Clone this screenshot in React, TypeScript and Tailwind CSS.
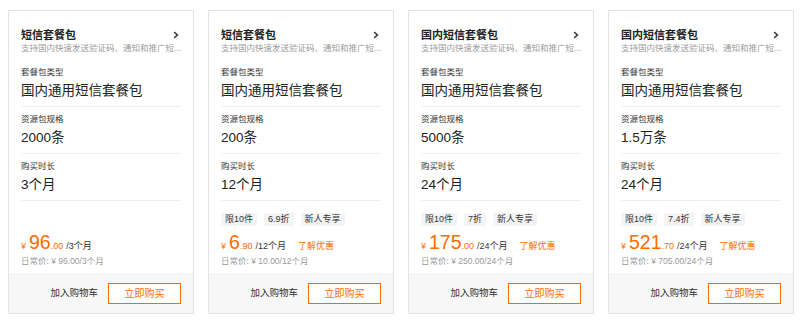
import React from "react";

type Pkg = {
  title: string;
  spec: string;
  duration: string;
  tags: string[];
  int: string;
  dec: string;
  unit: string;
  daily: string;
  promo: boolean;
};

const pkgs: Pkg[] = [
  { title: "短信套餐包", spec: "2000条", duration: "3个月", tags: [], int: "96", dec: ".00", unit: "/3个月", daily: "¥ 96.00/3个月", promo: false },
  { title: "短信套餐包", spec: "200条", duration: "12个月", tags: ["限10件", "6.9折", "新人专享"], int: "6", dec: ".90", unit: "/12个月", daily: "¥ 10.00/12个月", promo: true },
  { title: "国内短信套餐包", spec: "5000条", duration: "24个月", tags: ["限10件", "7折", "新人专享"], int: "175", dec: ".00", unit: "/24个月", daily: "¥ 250.00/24个月", promo: true },
  { title: "国内短信套餐包", spec: "1.5万条", duration: "24个月", tags: ["限10件", "7.4折", "新人专享"], int: "521", dec: ".70", unit: "/24个月", daily: "¥ 705.00/24个月", promo: true },
];

function Field({ label, value }: { label: string; value: string }) {
  return (
    <div className="pt-[6px] pb-[6px] border-b border-[#ededed]">
      <div className="text-[8.5px] leading-[12px] text-[#333]">{label}</div>
      <div className="mt-[4px] text-[13.5px] leading-[18px] text-[#222]">{value}</div>
    </div>
  );
}

function Card({ p }: { p: Pkg }) {
  return (
    <div className="w-[186px] h-[304px] shrink-0 flex flex-col bg-white border border-[#e3e3e3]">
      <div className="flex-1 flex flex-col px-[12px] pt-[17px]">
        <div className="flex items-center justify-between h-[14px]">
          <span className="text-[11px] leading-[14px] font-bold text-[#222]">{p.title}</span>
          <svg width="6" height="8" viewBox="0 0 6 8" className="mr-[2px]">
            <path d="M1.2 1 L4.4 4 L1.2 7" fill="none" stroke="#333" strokeWidth="1.5" />
          </svg>
        </div>
        <div className="text-[8.5px] leading-[12px] text-[#999] whitespace-nowrap">
          支持国内快速发送验证码、通知和推广短...
        </div>
        <div className="mt-[6px]">
          <Field label="套餐包类型" value="国内通用短信套餐包" />
          <Field label="资源包规格" value={p.spec} />
          <Field label="购买时长" value={p.duration} />
        </div>
        <div className="flex-1 flex flex-col justify-end pb-[6px]">
          {p.tags.length > 0 && (
            <div className="flex gap-[7px] mb-[5px]">
              {p.tags.map((t) => (
                <span key={t} className="bg-[#f4f4f4] px-[4px] text-[9px] leading-[13px] text-[#333]">
                  {t}
                </span>
              ))}
            </div>
          )}
          <div className="flex items-baseline h-[22px] text-[#ff6a00]">
            <span className="text-[9px] mr-[3px]">¥</span>
            <span className="text-[19.5px] leading-[22px]">{p.int}</span>
            <span className="text-[9px]">{p.dec}</span>
            <span className="text-[9px] text-[#333] ml-[3px]">{p.unit}</span>
            {p.promo && <span className="text-[9px] ml-[12px]">了解优惠</span>}
          </div>
          <div className="mt-[2px] text-[8.5px] leading-[12px] text-[#999]">日常价: {p.daily}</div>
        </div>
      </div>
      <div className="h-[40px] bg-[#f7f7f7] flex items-center justify-end gap-[10px] pr-[12px]">
        <span className="text-[9.5px] text-[#333]">加入购物车</span>
        <button className="w-[73px] h-[21px] border border-[#ff6a00] bg-white text-[10px] text-[#ff6a00]">
          立即购买
        </button>
      </div>
    </div>
  );
}

export default function App() {
  return (
    <div
      className="w-[800px] h-[325px] bg-white flex gap-[14px] pl-[8px] pt-[10px]"
      style={{ fontFamily: '"Liberation Sans", "Noto Sans CJK SC", sans-serif' }}
    >
      {pkgs.map((p, i) => (
        <Card key={i} p={p} />
      ))}
    </div>
  );
}
